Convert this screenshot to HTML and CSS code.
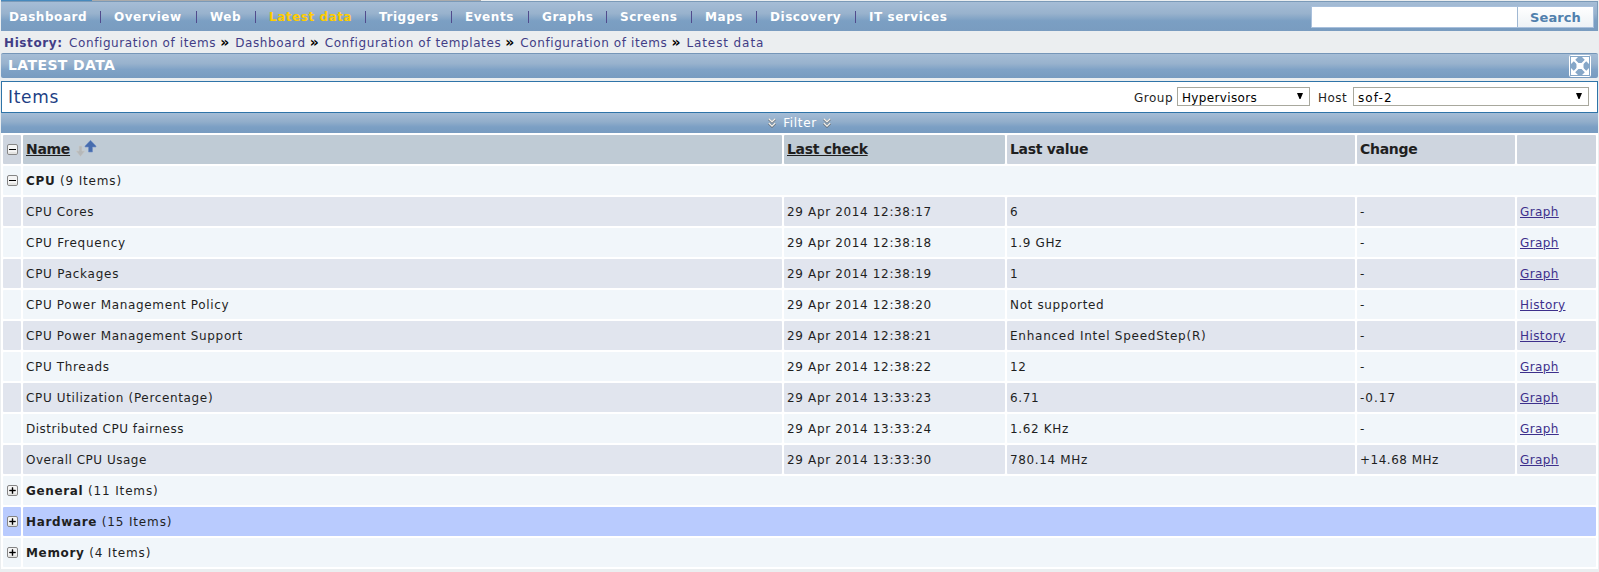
FILE: index.html
```html
<!DOCTYPE html>
<html lang="en">
<head>
<meta charset="utf-8">
<title>Latest data</title>
<link rel="stylesheet" href="styles.css">
</head>
<body>
<svg class="defs" width="0" height="0">
<symbol id="minus" viewBox="0 0 11 11"><rect x=".5" y=".5" width="10" height="10" rx="1.5" fill="#f4f4f4" stroke="#858585"/><path d="M1.5 8.5h8v1h-8z" fill="#d4d4d0"/><path d="M2 5h7v1H2z" fill="#000"/></symbol>
<symbol id="plus" viewBox="0 0 11 11"><rect x=".5" y=".5" width="10" height="10" rx="1.5" fill="#f4f4f4" stroke="#858585"/><path d="M1.5 8.5h8v1h-8z" fill="#d4d4d0"/><path d="M2.500 5h6v1h-6zM5 2.500h1v6H5z" fill="#000" stroke="#000" stroke-width=".4"/></symbol>
<symbol id="down" viewBox="0 0 8 10"><path d="M.7 1.200L4 4.200l3.300-3M.7 5.400L4 8.600l3.300-3.200" fill="none" stroke="#69737d" stroke-width="2.200"/><path d="M.8.8L4 3.800 7.200.8M.8 5L4 8.200 7.200 5" fill="none" stroke="#f2f0eb" stroke-width="1.300"/></symbol>
</svg>
<div class="strip"><i class="strip-blue"></i><i class="strip-gray"></i></div>
<nav class="menu">
<div class="tabs"><a>Dashboard</a><a>Overview</a><a>Web</a><a class="active">Latest data</a><a>Triggers</a><a>Events</a><a>Graphs</a><a>Screens</a><a>Maps</a><a>Discovery</a><a>IT services</a></div>
<div class="search"><div class="field"></div><div class="button">Search</div></div>
</nav>
<div class="history"><b>History:</b><a>Configuration of items</a><i>»</i><a>Dashboard</a><i>»</i><a>Configuration of templates</a><i>»</i><a>Configuration of items</a><i>»</i><a class="last">Latest data</a></div>
<div class="title"><span>LATEST DATA</span>
<svg class="full" viewBox="0 0 22 22"><rect x=".5" y=".5" width="21" height="21" rx="1" fill="#86a7c8" stroke="#fff"/><path d="M5 5l12 12M17 5L5 17" stroke="#fff" stroke-width="2"/><path d="M2 2h7L2 9zM20 2v7l-7-7zM2 20v-7l7 7zM20 20h-7l7-7z" fill="#fff"/><rect x="7.500" y="8" width="7" height="6" fill="#fff"/></svg></div>
<div class="items"><h1>Items</h1><label>Group</label><div class="select group"><span>Hypervisors</span><svg viewBox="0 0 6 6"><path d="M0 0h6L3.500 6h-1z"/></svg></div><label class="hostlabel">Host</label><div class="select host"><span>sof-2</span><svg viewBox="0 0 6 6"><path d="M0 0h6L3.500 6h-1z"/></svg></div></div>
<div class="filter"><svg><use href="#down"/></svg><span>Filter</span><svg><use href="#down"/></svg></div>
<div class="table">
<div class="row head"><div><svg class="box"><use href="#minus"/></svg></div><div class="sort"><u>Name</u><svg class="arrows" viewBox="0 0 20 17"><path d="M4 6h3v5h3l-4.500 5.500L1 11h3z" fill="#b5b8b9" stroke="#c9c9c7" stroke-width=".6"/><path d="M15.500.3L21 6v1h-3.500v5h-4V7H10V6z" fill="#466cae" stroke="#7292c7" stroke-width=".6"/></svg></div><div class="sort"><u>Last check</u></div><div>Last value</div><div>Change</div><div></div></div>
<div class="row group-row"><div><svg class="box"><use href="#minus"/></svg></div><div><b>CPU</b> (9 Items)</div></div>
<div class="row odd"><div></div><div>CPU Cores</div><div class="date">29 Apr 2014 12:38:17</div><div>6</div><div class="change">-</div><div><a>Graph</a></div></div>
<div class="row"><div></div><div class="wide">CPU Frequency</div><div class="date">29 Apr 2014 12:38:18</div><div>1.9 GHz</div><div class="change">-</div><div><a>Graph</a></div></div>
<div class="row odd"><div></div><div class="wide">CPU Packages</div><div class="date">29 Apr 2014 12:38:19</div><div>1</div><div class="change">-</div><div><a>Graph</a></div></div>
<div class="row"><div></div><div>CPU Power Management Policy</div><div class="date">29 Apr 2014 12:38:20</div><div>Not supported</div><div class="change">-</div><div><a>History</a></div></div>
<div class="row odd"><div></div><div>CPU Power Management Support</div><div class="date">29 Apr 2014 12:38:21</div><div class="wide">Enhanced Intel SpeedStep(R)</div><div class="change">-</div><div><a>History</a></div></div>
<div class="row"><div></div><div>CPU Threads</div><div class="date">29 Apr 2014 12:38:22</div><div>12</div><div class="change">-</div><div><a>Graph</a></div></div>
<div class="row odd"><div></div><div>CPU Utilization (Percentage)</div><div class="date">29 Apr 2014 13:33:23</div><div>6.71</div><div class="change">-0.17</div><div><a>Graph</a></div></div>
<div class="row"><div></div><div class="narrow">Distributed CPU fairness</div><div class="date">29 Apr 2014 13:33:24</div><div>1.62 KHz</div><div class="change">-</div><div><a>Graph</a></div></div>
<div class="row odd"><div></div><div class="narrow">Overall CPU Usage</div><div class="date">29 Apr 2014 13:33:30</div><div>780.14 MHz</div><div class="narrow">+14.68 MHz</div><div><a>Graph</a></div></div>
<div class="row group-row"><div><svg class="box"><use href="#plus"/></svg></div><div><b>General</b> (11 Items)</div></div>
<div class="row group-row selected"><div><svg class="box"><use href="#plus"/></svg></div><div><b>Hardware</b> (15 Items)</div></div>
<div class="row group-row"><div><svg class="box"><use href="#plus"/></svg></div><div><b>Memory</b> (4 Items)</div></div>
</div>
</body>
</html>
```
FILE: styles.css
```css
* { box-sizing: border-box; }
body { margin: 0; padding: 0 1px; height: 572px; overflow: hidden; background: #ebeef0; color: #1f1f1f; font: 12px/18px "DejaVu Sans", sans-serif; letter-spacing: .65px; white-space: nowrap; }
.defs { display: block; height: 0; }
.strip { display: flex; height: 1px; }
.strip-blue { width: 91px; background: #4689bd; }
.strip-gray { width: 389px; background: #aaa; }
.menu { display: flex; justify-content: space-between; height: 30px; padding: 5px 3px 0 8px; border: solid #7b9ab8; border-width: 1px 1px 0 0; background: linear-gradient(#a6bdd6, #98b2cd 40%, #7b9fc3 65%, #799cc0); }
.tabs { display: grid; grid-template-columns: 105px 96px 59px 110px 86px 77px 78px 85px 65px 99px 90px; }
.tabs a { display: flex; justify-content: space-between; height: 12px; margin-top: 4px; padding-right: 13px; line-height: 12px; color: #fff; font-weight: bold; letter-spacing: .55px; }
.tabs a:not(:last-child)::after { content: ""; width: 1px; background: #514b8d; }
.tabs .active { color: #fc0; }
.search { display: flex; height: 22px; border: 1px solid #a9c0dc; margin-top: -1px; }
.field { width: 205px; background: #fff; }
.button { width: 76px; border-left: 1px solid #a0b8d3; background: linear-gradient(#fff, #edf2f6); color: #5080ad; font-weight: bold; text-align: center; line-height: 21px; font-size: 13px; letter-spacing: .1px; }
.history { display: flex; height: 22px; padding: 3px 3px 0; color: #423d86; letter-spacing: .6px; }
.history b { width: 65px; }
.history i { width: 19px; padding-left: 4px; color: #000; font-size: 14px; line-height: 17px; font-style: normal; font-weight: bold; letter-spacing: 0; }
.history .last { letter-spacing: .9px; }
.title { display: flex; justify-content: space-between; height: 25px; padding: 1px 7px; border-top: 1px solid #7596b8; border-radius: 2px; background: linear-gradient(#a5bdd6, #98b2cd 40%, #7fa2c6 65%, #779bc0); color: #fff; font-weight: bold; line-height: 20px; font-size: 14px; letter-spacing: .4px; }
.full { width: 22px; height: 22px; }
.items { display: flex; height: 32px; margin-top: 3px; padding: 5px 8px 0 6px; border: 1px solid #2f74a8; background: #fff; }
.items h1 { margin: 0 auto 0 0; color: #1d3f85; font-size: 17px; font-weight: normal; line-height: 21px; letter-spacing: .7px; }
.items label { width: 43px; line-height: 22px; letter-spacing: .5px; }
.items .hostlabel { width: 35px; margin-left: 8px; }
.select { display: flex; justify-content: space-between; height: 19px; padding: 0 6px 0 4px; border: 1px solid #a8a89d; line-height: 20px; color: #000; letter-spacing: .35px; }
.group { width: 133px; }
.host { width: 236px; letter-spacing: 1.1px; }
.select svg { width: 6px; height: 6px; margin-top: 5px; }
.filter { display: flex; justify-content: center; align-items: center; height: 20px; gap: 7px; padding-bottom: 1px; background: linear-gradient(#a5bdd6, #91adca 45%, #7b9fc4 70%, #779bc0); color: #fff; }
.filter span { margin-right: -1px; }
.filter svg { width: 8px; height: 10px; }
.table { display: grid; gap: 2px; padding: 2px; background: #fff; }
.row { display: grid; grid-template-columns: 18px 759px 221px 348px 158px 79px; gap: 2px; height: 29px; }
.row > div { height: 29px; padding: 6px 3px 0; border-radius: 1px; background: #f1f6fa; }
.row > div:first-child { display: flex; justify-content: center; align-items: center; padding: 0; }
.group-row { grid-template-columns: 18px 1573px; }
.group-row > div { letter-spacing: .85px; }
.group-row b { letter-spacing: .65px; }
.row > .date { letter-spacing: .65px; }
.row > .wide { letter-spacing: .75px; }
.row > .narrow { letter-spacing: .5px; }
.row > .change { letter-spacing: 1px; }
.row.odd > div { background: #e1e5ee; }
.row.head > div { padding-top: 5px; background: #ced5df; font-size: 14px; font-weight: bold; letter-spacing: -.3px; }
.row.head > div:first-child { padding: 0; }
.row.head > .sort { background: #bfcbd5; }
.row.selected > div { background: #b9cbfe; }
.row a { color: #3d308c; text-decoration: underline; letter-spacing: .4px; }
.box { width: 11px; height: 11px; }
.arrows { width: 20px; height: 17px; margin: -4px 0 0 5px; vertical-align: -3px; overflow: visible; }
```
